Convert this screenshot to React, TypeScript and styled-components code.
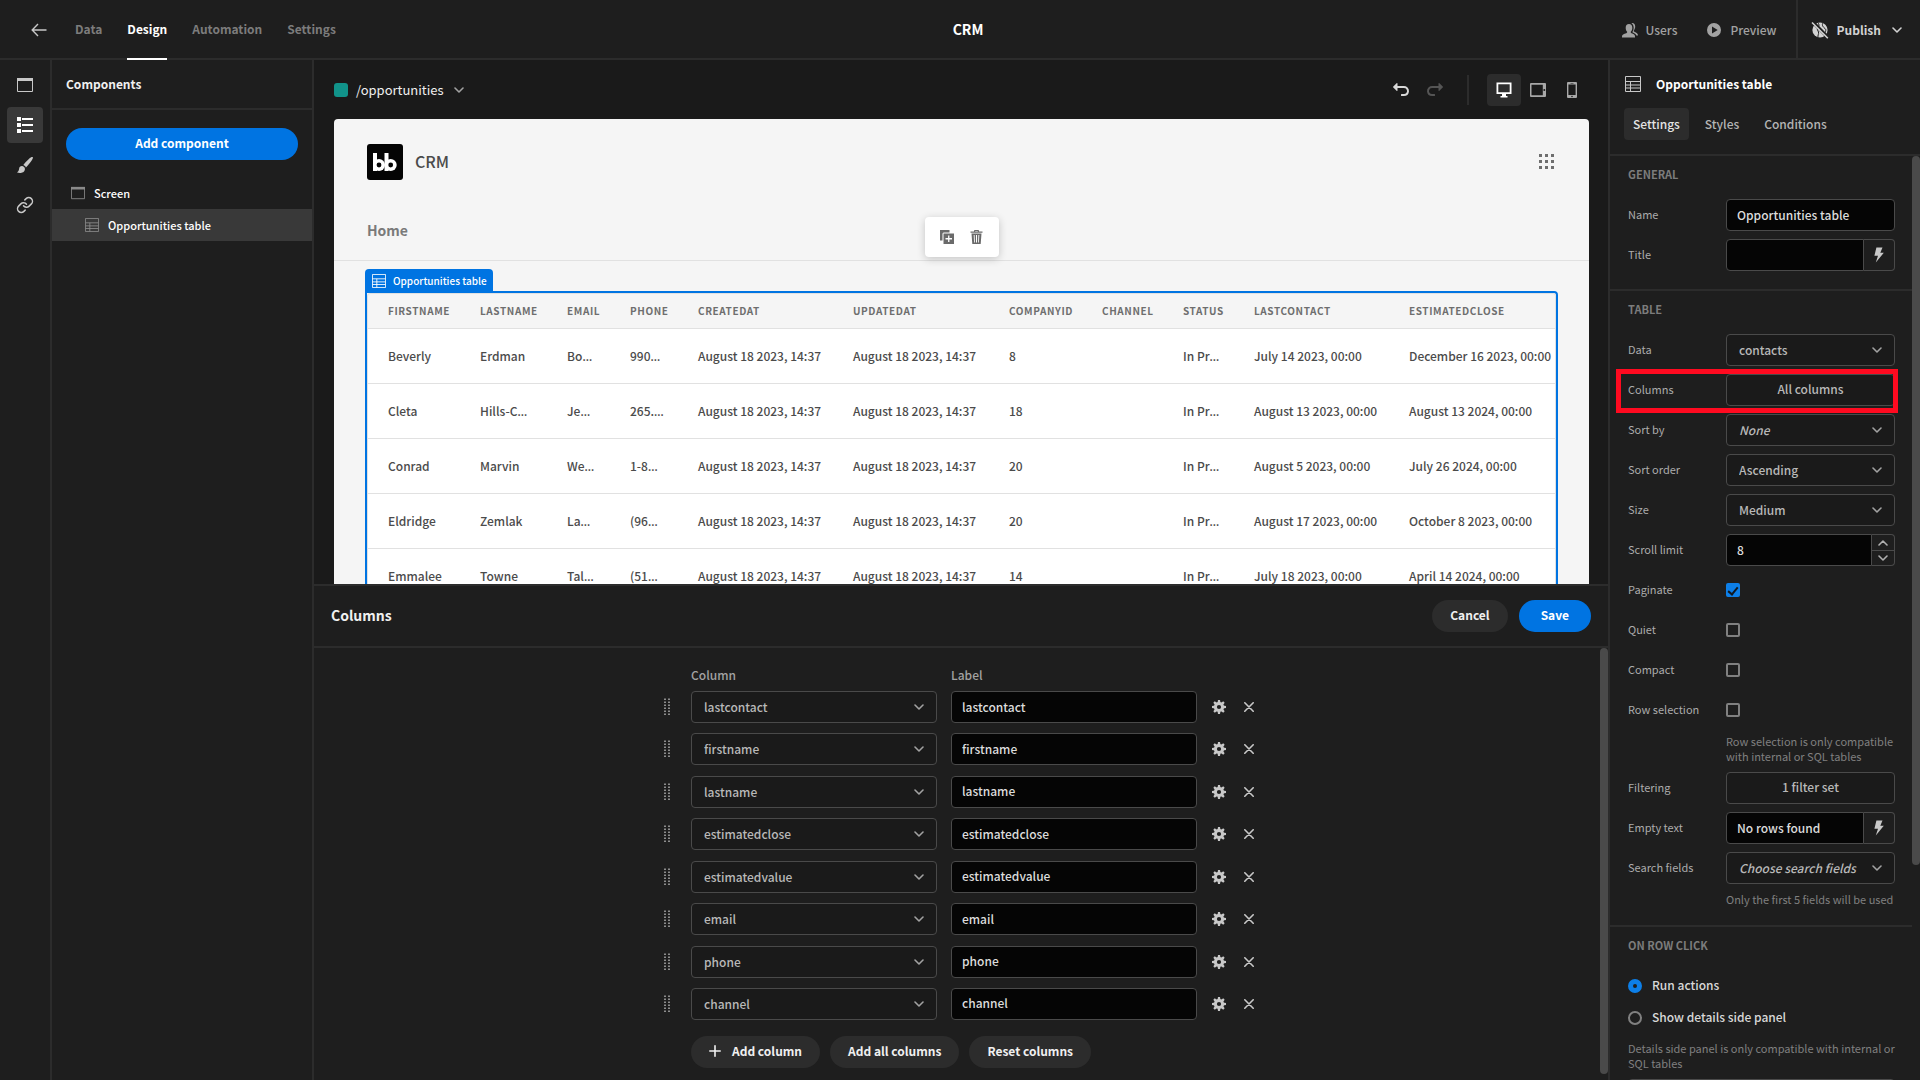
import React from "react";
import styled, { createGlobalStyle, css } from "styled-components";
import { Link as LinkIcon } from "lucide-react";

const c = {
  bg: "#1a1a1a",
  panel: "#1e1e1e",
  raised: "#2c2c2c",
  selected: "#393939",
  line: "#2c2c2c",
  control: "#4a4a4a",
  input: "#050505",
  text: "#c8c8c8",
  bright: "#f0f0f0",
  muted: "#a2a2a2",
  dim: "#7c7c7c",
  blue: "#0074e2",
};

const Global = createGlobalStyle`
  *, *::before, *::after { box-sizing: border-box; }
  body { margin: 0; background: ${c.bg}; }
  body, button, input, select {
    font-family: "Noto Sans CJK SC", "Noto Sans", sans-serif;
    font-size: 12px;
    line-height: 16px;
  }
  button { margin: 0; padding: 0; border: 0; background: none; color: inherit; cursor: pointer; }
  h1, h2, h3, p { margin: 0; }
  svg { display: block; flex: none; }
`;

/* ---------- icons ---------- */

const ArrowLeft = () => (
  <svg width="16" height="14" viewBox="0 0 16 14" fill="none" stroke="currentColor" strokeWidth="1.4">
    <path d="M15.5 7H1.2M7 1L1.2 7L7 13" />
  </svg>
);
const Page = ({ w = 16 }: { w?: number }) => (
  <svg width={w} height={w} viewBox="0 0 16 16" fill="none" stroke="currentColor">
    <path d="M.5 3V14.5H15.5V3" />
    <path d="M0 2.5H16" strokeWidth="3" />
  </svg>
);
const ListView = () => (
  <svg width="16" height="16" viewBox="0 0 16 16" fill="currentColor">
    <path d="M0 0H4V4H0ZM0 6H4V10H0ZM0 12H4V16H0ZM5 1H16V3H5ZM5 7H16V9H5ZM5 13H16V15H5Z" />
  </svg>
);
const Brush = () => (
  <svg width="18" height="18" viewBox="0 0 18 18" fill="currentColor">
    <path d="M16.7 1.1C16 .5 14.800 1.200 13.600 2.200C10.900 4.600 8.200 7.700 7.300 9.100C8.600 9.500 9.500 10.400 9.900 11.500C11.600 9.900 14.400 6.600 16 4C16.800 2.700 17.200 1.600 16.700 1.100Z" />
    <path d="M6.300 10.100C4.500 9.900 3.300 11.100 3.100 12.700C2.900 14.300 2.200 15.600 1 16.500C3.600 17.300 6.600 16.900 8 15.400C9.300 14 9.100 12.300 8.300 11.300C7.800 10.600 7.100 10.200 6.300 10.100Z" />
  </svg>
);
const TableIcon = ({ w = 16 }: { w?: number }) => (
  <svg width={w} height={w} viewBox="0 0 16 16" fill="none" stroke="currentColor">
    <path d="M.5 .5H15.500V15.500H.5ZM.5 5.500H15.500M.5 9H15.500M.5 12H15.500M5.500 5.500V15.500" />
  </svg>
);
const Chevron = ({ up }: { up?: boolean }) => (
  <svg width="10" height="6" viewBox="0 0 10 6" fill="none" stroke="currentColor" strokeWidth="1.600" strokeLinecap="round" strokeLinejoin="round">
    <path d={up ? "M1 5L5 1L9 5" : "M1 1L5 5L9 1"} />
  </svg>
);
const undoPath =
  "M15.3315,6.271A5.1695,5.1695,0,0,0,11.8355,5H5.5V2.4A.4.4,0,0,0,5.1,2a.392.392,0,0,0-.2635.1L1.072,5.8245a.25.25,0,0,0,0,.35L4.834,9.9a.392.392,0,0,0,.2635.1.4.4,0,0,0,.4-.4V7h6.441a3.06934,3.06934,0,0,1,3.0555,2.4355A3,3,0,0,1,12,13H9.5a.5.5,0,0,0-.5.5v1a.5.5,0,0,0,.5.5h2.263a5.16751,5.16751,0,0,0,5.213-4.5055A4.9725,4.9725,0,0,0,15.3315,6.271Z";
const Undo = ({ flip }: { flip?: boolean }) => (
  <svg width="18" height="18" viewBox="0 0 18 18" fill="currentColor">
    <path d={undoPath} transform={flip ? "matrix(-1 0 0 1 18 0)" : undefined} />
  </svg>
);
const Desktop = () => (
  <svg width="16" height="16" viewBox="0 0 16 16" fill="currentColor">
    <path fillRule="evenodd" d="M.5 .5H15.500V12H10V14H11.500V15.500H4.500V14H6V12H.5ZM2.300 2.300V10.200H13.700V2.300Z" />
  </svg>
);
const Tablet = () => (
  <svg width="16" height="14" viewBox="0 0 16 14" fill="currentColor">
    <path fillRule="evenodd" d="M1 0H15A1 1 0 0 1 16 1V13A1 1 0 0 1 15 14H1A1 1 0 0 1 0 13V1A1 1 0 0 1 1 0ZM1.500 1.700V12.300H12.800V1.700ZM14.300 6A1 1 0 1 0 14.300 8A1 1 0 1 0 14.300 6Z" />
  </svg>
);
const Phone = () => (
  <svg width="10" height="16" viewBox="0 0 10 16" fill="currentColor">
    <path fillRule="evenodd" d="M1 0H9A1 1 0 0 1 10 1V15A1 1 0 0 1 9 16H1A1 1 0 0 1 0 15V1A1 1 0 0 1 1 0ZM1.400 2.500V13H8.600V2.500ZM3.500 .9V1.600H6.500V.9ZM5 13.700A.8 .8 0 1 0 5 15.300A.8 .8 0 1 0 5 13.700Z" />
  </svg>
);
const Users = () => (
  <svg width="16" height="15" viewBox="0 0 16 15" fill="currentColor">
    <path d="M7 1C9.200 1 10.300 2.600 10.300 4.700C10.300 6.300 9.700 7.700 8.900 8.600C8.500 9.300 8.700 9.900 9.500 10.200C11.700 10.900 13 11.600 13 13.400V14.500H0V13.400C0 11.600 1.800 10.900 4.300 10.200C5.200 9.900 5.400 9.300 5 8.600C4.200 7.700 3.700 6.300 3.700 4.700C3.700 2.600 4.800 1 7 1Z" />
    <path d="M9.500 .2C11.700 -.3 13.200 1.300 13.200 3.600C13.200 5.200 12.600 6.400 12 7.200C11.600 7.900 11.800 8.500 12.400 8.800C14.600 9.600 16 10.600 16 12.500H14.400C13.900 11 12.300 10.200 10.700 9.500C10.300 9.200 10.400 8.900 10.700 8.500C11.500 7 11.800 5.500 11.600 4C11.400 2.200 10.700 1 9.500 .2Z" />
  </svg>
);
const Play = () => (
  <svg width="14" height="14" viewBox="0 0 14 14" fill="currentColor">
    <path fillRule="evenodd" d="M7 0A7 7 0 1 0 7 14A7 7 0 1 0 7 0ZM5 3.500L10.700 7L5 10.500Z" />
  </svg>
);
const GlobeOff = () => (
  <svg width="18" height="18" viewBox="0 0 18 18">
    <circle cx="9" cy="9" r="7.600" fill="currentColor" />
    <path d="M6.500 1.500C8.500 3 8.500 5 6.800 6.800C5.500 8.300 7 9.500 7.500 11C8 13 6.500 14.500 7 16.500M12 2C10.500 4 12 6 14 7.500C16 9 14 12 12 14" stroke={c.panel} strokeWidth="1" fill="none" />
    <path d="M1.500 .8L17.200 16.500" stroke={c.panel} strokeWidth="3.400" />
    <path d="M1 1.500L16.800 17.200" stroke="currentColor" strokeWidth="1.600" />
  </svg>
);
const GridDots = () => (
  <svg width="17" height="16" viewBox="0 0 17 16" fill="currentColor">
    {[0, 6, 12].map((y) => [0, 6, 12].map((x) => <rect key={`${x}-${y}`} x={x} y={y} width="3" height="3" />))}
  </svg>
);
const Duplicate = () => (
  <svg width="14" height="14" viewBox="0 0 14 14" fill="currentColor">
    <path d="M0 0H9.500V2.500H3.500L2.500 3.500V10.500H0Z" />
    <path fillRule="evenodd" d="M3.500 3.500H14V14H3.500ZM8.100 5.500V8.100H5.500V9.400H8.100V12H9.400V9.400H12V8.100H9.400V5.500Z" />
  </svg>
);
const Trash = () => (
  <svg width="13" height="14" viewBox="0 0 13 14" fill="currentColor">
    <path d="M4 1.500V.8A.8 .8 0 0 1 4.800 0H8.200A.8 .8 0 0 1 9 .8V1.500H12.500V2.800H.5V1.500ZM5.200 1.500H7.800V1H5.200Z" fillRule="evenodd" />
    <path fillRule="evenodd" d="M1.500 3.500H11.500L10.700 14H2.300ZM3.700 5L4.100 12.500H4.900L4.600 5ZM6 5V12.500H7V5ZM8.400 5L8.100 12.500H8.900L9.300 5Z" />
  </svg>
);
const Bolt = () => (
  <svg width="10" height="16" viewBox="0 0 10 16" fill="currentColor">
    <path d="M2.400 .5H8.500L6.300 5.800H9.800L1.800 15.500L4 8.800H.4Z" />
  </svg>
);
const Gear = () => (
  <svg width="14" height="14" viewBox="0 0 14 14" fill="currentColor">
    {[0, 45, 90, 135].map((a) => (
      <path key={a} transform={`rotate(${a} 7 7)`} d="M6 0H8L8.500 3H5.500ZM6 14H8L8.500 11H5.500Z" />
    ))}
    <path fillRule="evenodd" d="M7 1.900A5.100 5.100 0 1 0 7 12.100A5.100 5.100 0 1 0 7 1.900ZM7 4.900A2.100 2.100 0 1 1 7 9.100A2.100 2.100 0 1 1 7 4.900Z" />
  </svg>
);
const Cross = () => (
  <svg width="10" height="10" viewBox="0 0 10 10" stroke="currentColor" strokeWidth="1.600" strokeLinecap="round">
    <path d="M.8 .8L9.200 9.200M9.200 .8L.8 9.200" />
  </svg>
);
const Plus = () => (
  <svg width="12" height="12" viewBox="0 0 12 12" stroke="currentColor" strokeWidth="1.600" strokeLinecap="round">
    <path d="M6 .8V11.200M.8 6H11.200" />
  </svg>
);
const DragDots = () => (
  <svg width="12" height="18" viewBox="0 0 12 18" fill="currentColor">
    {[0, 3, 6, 9, 12, 15].map((y) => [3, 7].map((x) => <rect key={`${x}-${y}`} x={x} y={y + 0.500} width="2" height="1.500" />))}
  </svg>
);
const Logo = () => (
  <svg width="36" height="36" viewBox="0 0 36 36">
    <rect width="36" height="36" rx="3" fill="#040404" />
    <g fill="#fff">
      <path d="M6 9H10V27H6ZM17.500 9H21.500V27H17.500Z" />
      <circle cx="12" cy="21" r="6" />
      <circle cx="23.700" cy="21" r="6" />
    </g>
    <circle cx="12" cy="21" r="2.400" fill="#040404" />
    <circle cx="23.700" cy="21" r="2.400" fill="#040404" />
  </svg>
);

/* ---------- frame ---------- */

const Shell = styled.div`
  display: flex;
  flex-direction: column;
  height: 100vh;
  overflow: hidden;
  background: ${c.panel};
  color: ${c.text};
`;
const TopBar = styled.header`
  display: grid;
  grid-template-columns: 1fr auto 1fr;
  align-items: stretch;
  height: 60px;
  flex: none;
  padding-left: 16px;
  border-bottom: 2px solid ${c.line};
`;
const TopNav = styled.nav`
  display: flex;
  align-items: center;
  gap: 25px;
  padding-left: 15px;
`;
const BackButton = styled.button`
  margin-right: 3px;
  color: ${c.text};
`;
const TopLink = styled.a<{ $active?: boolean }>`
  display: flex;
  align-items: center;
  height: 60px;
  align-self: flex-start;
  font-weight: 700;
  text-decoration: none;
  color: ${(p) => (p.$active ? "#fff" : c.dim)};
  border-bottom: 2px solid ${(p) => (p.$active ? "#fff" : "transparent")};
`;
const AppTitle = styled.h1`
  align-self: center;
  padding-bottom: 2px;
  font-size: 14px;
  font-weight: 700;
  line-height: 20px;
  color: #fff;
`;
const TopActions = styled.div`
  display: flex;
  justify-content: flex-end;
`;
const TopAction = styled.button`
  display: flex;
  align-items: center;
  gap: 8px;
  margin-right: 30px;
  font-weight: 500;
  color: ${c.muted};
  &:nth-of-type(2) { gap: 9px; margin-right: 19px; }
`;
const PublishButton = styled.button`
  display: flex;
  align-items: center;
  gap: 8px;
  padding: 0 18px 0 13px;
  border-left: 2px solid ${c.line};
  font-weight: 700;
  color: #d2d2d2;
  & > :last-child { margin-left: 3px; }
`;
const Body = styled.div`
  display: flex;
  flex: 1;
  min-height: 0;
`;

/* ---------- left side ---------- */

const Rail = styled.nav`
  display: flex;
  flex-direction: column;
  align-items: center;
  gap: 4px;
  width: 52px;
  flex: none;
  padding-top: 7px;
  border-right: 2px solid ${c.line};
`;
const RailButton = styled.button<{ $active?: boolean }>`
  display: grid;
  place-items: center;
  width: 36px;
  height: 36px;
  border-radius: 4px;
  color: ${(p) => (p.$active ? "#fff" : c.text)};
  background: ${(p) => (p.$active ? c.selected : "transparent")};
`;
const Side = styled.aside`
  display: flex;
  flex-direction: column;
  width: 262px;
  flex: none;
  border-right: 2px solid ${c.line};
`;
const SideTitle = styled.h2`
  padding: 16px 14px;
  border-bottom: 2px solid ${c.line};
  font-size: 12px;
  font-weight: 700;
  line-height: 16px;
  color: ${c.bright};
`;
const pill = css`
  display: inline-flex;
  align-items: center;
  justify-content: center;
  height: 32px;
  border-radius: 16px;
  font-weight: 700;
`;
const PrimaryPill = styled.button`
  ${pill}
  padding: 0 22px 2px;
  background: ${c.blue};
  color: #fff;
`;
const Pill = styled.button`
  ${pill}
  gap: 11px;
  padding: 0 18px 2px;
  background: ${c.raised};
  color: ${c.bright};
`;
const AddComponent = styled(PrimaryPill)`
  margin: 18px 14px 17px;
`;
const TreeItem = styled.button<{ $depth: number; $active?: boolean }>`
  display: flex;
  align-items: center;
  gap: 9px;
  height: 32px;
  padding-left: ${(p) => 19 + p.$depth * 14}px;
  font-size: 11px;
  font-weight: 500;
  color: #fff;
  background: ${(p) => (p.$active ? c.selected : "transparent")};
  svg { color: #8a8a8a; }
`;

/* ---------- centre ---------- */

const Centre = styled.main`
  position: relative;
  display: flex;
  flex-direction: column;
  flex: 1;
  min-width: 0;
  background: ${c.bg};
`;
const Toolbar = styled.div`
  display: flex;
  align-items: center;
  padding: 14px 19px 13px 20px;
`;
const ScreenPicker = styled.button`
  display: flex;
  align-items: center;
  gap: 8px;
  margin-right: auto;
  font-size: 13px;
  color: #f0f0f0;
  & > svg { margin-left: 2px; color: ${c.muted}; }
`;
const Swatch = styled.span`
  width: 14px;
  height: 14px;
  border-radius: 3px;
  background: #11938a;
`;
const ToolButton = styled.button<{ $active?: boolean; $tone?: string }>`
  display: grid;
  place-items: center;
  width: 34px;
  height: 32px;
  border-radius: 4px;
  color: ${(p) => p.$tone ?? "#a8a8a8"};
  background: ${(p) => (p.$active ? c.raised : "transparent")};
`;
const ToolDivider = styled.span`
  width: 2px;
  height: 30px;
  margin: 0 18px 0 15px;
  background: ${c.line};
`;
const Preview = styled.section`
  flex: 1;
  min-height: 0;
  margin: 0 19px 0 20px;
  padding: 25px 33px 0;
  overflow: hidden;
  border-radius: 4px 4px 0 0;
  background: #f5f5f5;
  color: #4b4b4b;
`;
const PreviewHead = styled.div`
  display: flex;
  align-items: center;
  gap: 12px;
  & > :last-child { margin-left: auto; color: #6e6e6e; }
`;
const PreviewTitle = styled.h2`
  padding-bottom: 2px;
  font-size: 16px;
  font-weight: 500;
  line-height: 24px;
`;
const PreviewNav = styled.nav`
  margin: 0 -33px;
  padding: 40px 33px 20px;
  border-bottom: 1px solid #e1e1e1;
  a {
    font-size: 14px;
    line-height: 20px;
    font-weight: 700;
    text-decoration: none;
    color: #7a7a7a;
  }
`;
const Selected = styled.div`
  position: relative;
  margin: 30px -2px 0;
  border: 2px solid ${c.blue};
  border-radius: 0 4px 4px 4px;
`;
const SelectedTag = styled.span`
  position: absolute;
  left: -2px;
  bottom: 100%;
  display: flex;
  align-items: center;
  gap: 7px;
  height: 24px;
  padding: 0 6px 0 7px;
  border-radius: 4px 4px 0 0;
  background: ${c.blue};
  color: #fff;
  font-size: 10px;
  font-weight: 500;
`;
const FloatingTools = styled.div`
  position: absolute;
  left: 50%;
  bottom: calc(100% + 36px);
  transform: translateX(-50%);
  display: flex;
  align-items: center;
  gap: 16px;
  height: 40px;
  padding: 0 16px 0 15px;
  border-radius: 4px;
  background: #fff;
  box-shadow: 0 2px 8px rgba(0, 0, 0, 0.200);
  color: #6a6a6a;
`;
const TableClip = styled.div`
  overflow: hidden;
  border: 1px solid #e1e1e1;
  border-radius: 3px;
`;
const DataTable = styled.table`
  table-layout: fixed;
  width: 1240px;
  border-collapse: separate;
  border-spacing: 0;
  th, td {
    padding: 0 0 0 20px;
    text-align: left;
    white-space: nowrap;
    border-bottom: 1px solid #e1e1e1;
  }
  th {
    height: 35px;
    font-size: 10px;
    font-weight: 700;
    letter-spacing: 0.060em;
    color: #6e6e6e;
  }
  td {
    height: 55px;
    font-weight: 500;
    color: #4b4b4b;
    background: #fff;
  }
`;
const Dots = styled.span`
  font-family: "Noto Sans", sans-serif;
`;

/* ---------- bottom drawer ---------- */

const Drawer = styled.section`
  position: relative;
  display: flex;
  flex-direction: column;
  flex: 0 0 496px;
  border-top: 2px solid ${c.line};
  background: ${c.panel};
`;
const DrawerHead = styled.div`
  display: flex;
  align-items: center;
  gap: 11px;
  padding: 14px 17px;
  border-bottom: 2px solid ${c.line};
  h2 {
    margin-right: auto;
    padding-bottom: 2px;
    font-size: 14px;
    font-weight: 700;
    line-height: 20px;
    color: ${c.bright};
  }
`;
const DrawerBody = styled.div`
  width: 100%;
  max-width: 600px;
  margin: 0 auto;
  padding: 19px 4px 0 0;
`;
const FieldGrid = styled.div`
  display: grid;
  grid-template-columns: 16px 1fr 1fr 16px 16px;
  column-gap: 14px;
  align-items: center;
`;
const FieldHead = styled(FieldGrid)`
  margin-bottom: 8px;
  color: ${c.muted};
  font-weight: 500;
  & > :first-child { grid-column: 2; }
`;
const FieldList = styled.div`
  display: flex;
  flex-direction: column;
  justify-content: space-between;
  height: 329px;
`;
const IconButton = styled.button`
  display: grid;
  place-items: center;
  height: 32px;
  color: ${c.text};
`;
const DragHandle = styled.span`
  color: #8c8c8c;
`;
const DrawerActions = styled.div`
  display: flex;
  gap: 10px;
  padding: 16px 0 0 30px;
`;
const DrawerThumb = styled.span`
  position: absolute;
  top: 62px;
  right: 0;
  bottom: 6px;
  width: 8px;
  border-radius: 4px;
  background: #4a4a4a;
`;

/* ---------- controls ---------- */

const box = css`
  width: 100%;
  min-width: 0;
  height: 32px;
  margin: 0;
  border: 1px solid ${c.control};
  border-radius: 4px;
  outline: none;
`;
const TextInput = styled.input`
  ${box}
  padding: 0 10px 2px;
  background: ${c.input};
  color: #dcdcdc;
  font-weight: 500;
`;
const SelectWrap = styled.span`
  position: relative;
  display: block;
  color: ${c.muted};
  svg {
    position: absolute;
    top: 13px;
    right: 13px;
    pointer-events: none;
  }
`;
const SelectBox = styled.select<{ $hint?: boolean }>`
  ${box}
  appearance: none;
  padding: 0 24px 0 12px;
  background: ${c.bg};
  color: #b8b8b8;
  font-weight: 500;
  font-style: ${(p) => (p.$hint ? "italic" : "normal")};
`;
const ActionBox = styled.button`
  ${box}
  padding-bottom: 2px;
  background: ${c.bg};
  color: #b8b8b8;
  font-weight: 500;
`;
const Joined = styled.div<{ $side: number }>`
  display: grid;
  grid-template-columns: 1fr ${(p) => p.$side}px;
  & > input { border-radius: 4px 0 0 4px; }
`;
const BoltButton = styled.button`
  display: grid;
  place-items: center;
  border: 1px solid ${c.control};
  border-left: 0;
  border-radius: 0 4px 4px 0;
`;
const Stepper = styled.div`
  display: grid;
  grid-template-rows: 1fr 1fr;
  border: 1px solid ${c.control};
  border-left: 0;
  border-radius: 0 4px 4px 0;
  color: #b0b0b0;
  button { display: grid; place-items: center; }
  button + button { border-top: 1px solid ${c.control}; }
`;
const CheckBox = styled.input`
  appearance: none;
  display: grid;
  place-items: center;
  width: 14px;
  height: 14px;
  margin: 0;
  border: 2px solid #808080;
  border-radius: 2px;
  &:checked { border-color: #0d7fe8; background: #0d7fe8; }
  &:checked::after {
    content: "";
    width: 6px;
    height: 10px;
    margin-bottom: 2px;
    border: solid #101820;
    border-width: 0 2px 2px 0;
    transform: rotate(40deg);
  }
`;
const RadioRow = styled.label`
  display: flex;
  align-items: center;
  gap: 10px;
  height: 32px;
  font-size: 12px;
  font-weight: 500;
  color: #d8d8d8;
  span { padding-bottom: 2px; }
`;
const Radio = styled.input`
  appearance: none;
  width: 14px;
  height: 14px;
  margin: 0;
  border: 2px solid #808080;
  border-radius: 50%;
  &:checked { border: 5px solid #0d7fe8; }
`;

/* ---------- settings panel ---------- */

const Settings = styled.aside`
  display: flex;
  flex-direction: column;
  width: 312px;
  flex: none;
  border-left: 2px solid ${c.line};
`;
const SettingsTitle = styled.h2`
  display: flex;
  align-items: center;
  gap: 15px;
  height: 48px;
  padding-left: 15px;
  font-size: 12px;
  font-weight: 700;
  color: #fff;
  svg { color: ${c.text}; }
`;
const Tabs = styled.div`
  display: flex;
  gap: 7px;
  padding: 0 14px 14px;
  border-bottom: 2px solid ${c.line};
`;
const Tab = styled.button<{ $active?: boolean }>`
  height: 32px;
  padding: 0 9px;
  border-radius: 4px;
  font-weight: 500;
  color: ${(p) => (p.$active ? "#e4e4e4" : "#b4b4b4")};
  background: ${(p) => (p.$active ? c.raised : "transparent")};
`;
const SettingsBody = styled.div`
  display: flex;
  flex: 1;
  min-height: 0;
  overflow: hidden;
`;
const Sections = styled.div`
  flex: 1;
  min-width: 0;
`;
const SettingsThumb = styled.span`
  width: 8px;
  height: 709px;
  border-radius: 4px;
  background: #4a4a4a;
`;
const Section = styled.section<{ $tight?: boolean }>`
  display: flex;
  flex-direction: column;
  gap: ${(p) => (p.$tight ? 0 : 8)}px;
  padding: 8px 17px 18px 18px;
  border-bottom: 2px solid ${c.line};
  h3 {
    margin-bottom: ${(p) => (p.$tight ? 15 : 7)}px;
    font-size: 11px;
    font-weight: 700;
    line-height: 20px;
    color: #7c7c7c;
  }
`;
const Row = styled.div`
  position: relative;
  display: grid;
  grid-template-columns: 98px 1fr;
  align-items: center;
  min-height: 32px;
  & > label, & > span:first-child { padding-bottom: 2px; font-size: 11px; color: #acacac; }
`;
const Highlight = styled.span`
  position: absolute;
  inset: -5px -3px -7px -12px;
  border: 5px solid #ff0a20;
  pointer-events: none;
`;
const Help = styled.p<{ $indent?: boolean }>`
  margin-left: ${(p) => (p.$indent ? 98 : 0)}px;
  font-size: 11px;
  line-height: 15px;
  color: #808080;
`;
const WideHelp = styled(Help)`
  margin: 7px 0 8px;
`;

const Select = ({ id, value, hint, label }: { id?: string; value: string; hint?: boolean; label?: string }) => (
  <SelectWrap>
    <SelectBox id={id} aria-label={label} $hint={hint} defaultValue={value}>
      <option>{value}</option>
    </SelectBox>
    <Chevron />
  </SelectWrap>
);

const Cell = ({ value }: { value: string }) =>
  value.endsWith("…") ? <td>{value.slice(0, -1)}<Dots>…</Dots></td> : <td>{value}</td>;

const fields = ["lastcontact", "firstname", "lastname", "estimatedclose", "estimatedvalue", "email", "phone", "channel"];

const heads: [string, number][] = [
  ["firstName", 92], ["lastName", 87], ["email", 63], ["phone", 68], ["createdAt", 155], ["updatedAt", 156],
  ["companyId", 93], ["channel", 81], ["status", 71], ["lastContact", 155], ["estimatedClose", 219],
];
const stamp = "August 18 2023, 14:37";
const rows = [
  ["Beverly", "Erdman", "Bo…", "990…", stamp, stamp, "8", "", "In Pr…", "July 14 2023, 00:00", "December 16 2023, 00:00"],
  ["Cleta", "Hills-C…", "Je…", "265.…", stamp, stamp, "18", "", "In Pr…", "August 13 2023, 00:00", "August 13 2024, 00:00"],
  ["Conrad", "Marvin", "We…", "1-8…", stamp, stamp, "20", "", "In Pr…", "August 5 2023, 00:00", "July 26 2024, 00:00"],
  ["Eldridge", "Zemlak", "La…", "(96…", stamp, stamp, "20", "", "In Pr…", "August 17 2023, 00:00", "October 8 2023, 00:00"],
  ["Emmalee", "Towne", "Tal…", "(51…", stamp, stamp, "14", "", "In Pr…", "July 18 2023, 00:00", "April 14 2024, 00:00"],
];

export default function App() {
  return (
    <Shell>
      <Global />
      <TopBar>
        <TopNav>
          <BackButton aria-label="Back"><ArrowLeft /></BackButton>
          <TopLink href="#data">Data</TopLink>
          <TopLink href="#design" $active>Design</TopLink>
          <TopLink href="#automation">Automation</TopLink>
          <TopLink href="#settings">Settings</TopLink>
        </TopNav>
        <AppTitle>CRM</AppTitle>
        <TopActions>
          <TopAction><Users />Users</TopAction>
          <TopAction><Play />Preview</TopAction>
          <PublishButton><GlobeOff />Publish<Chevron /></PublishButton>
        </TopActions>
      </TopBar>
      <Body>
        <Rail>
          <RailButton aria-label="Screens"><Page /></RailButton>
          <RailButton aria-label="Components" $active><ListView /></RailButton>
          <RailButton aria-label="Theme"><Brush /></RailButton>
          <RailButton aria-label="Navigation"><LinkIcon size={18} /></RailButton>
        </Rail>
        <Side>
          <SideTitle>Components</SideTitle>
          <AddComponent>Add component</AddComponent>
          <TreeItem $depth={0}><Page w={14} />Screen</TreeItem>
          <TreeItem $depth={1} $active><TableIcon w={14} />Opportunities table</TreeItem>
        </Side>
        <Centre>
          <Toolbar>
            <ScreenPicker><Swatch />/opportunities<Chevron /></ScreenPicker>
            <ToolButton aria-label="Undo" $tone="#d8d8d8"><Undo /></ToolButton>
            <ToolButton aria-label="Redo" $tone="#555"><Undo flip /></ToolButton>
            <ToolDivider />
            <ToolButton aria-label="Desktop" $active $tone="#fff"><Desktop /></ToolButton>
            <ToolButton aria-label="Tablet"><Tablet /></ToolButton>
            <ToolButton aria-label="Mobile"><Phone /></ToolButton>
          </Toolbar>
          <Preview>
            <PreviewHead>
              <Logo />
              <PreviewTitle>CRM</PreviewTitle>
              <GridDots />
            </PreviewHead>
            <PreviewNav><a href="#home">Home</a></PreviewNav>
            <Selected>
              <SelectedTag><TableIcon w={14} />Opportunities table</SelectedTag>
              <FloatingTools>
                <button aria-label="Duplicate"><Duplicate /></button>
                <button aria-label="Delete"><Trash /></button>
              </FloatingTools>
              <TableClip>
                <DataTable>
                  <colgroup>{heads.map(([h, w]) => <col key={h} width={w} />)}</colgroup>
                  <thead>
                    <tr>{heads.map(([h]) => <th key={h}>{h.toUpperCase()}</th>)}</tr>
                  </thead>
                  <tbody>
                    {rows.map((r) => (
                      <tr key={r[0]}>{r.map((v, i) => <Cell key={i} value={v} />)}</tr>
                    ))}
                  </tbody>
                </DataTable>
              </TableClip>
            </Selected>
          </Preview>
          <Drawer>
            <DrawerHead>
              <h2>Columns</h2>
              <Pill>Cancel</Pill>
              <PrimaryPill>Save</PrimaryPill>
            </DrawerHead>
            <DrawerBody>
              <FieldHead><span>Column</span><span>Label</span></FieldHead>
              <FieldList>
                {fields.map((f) => (
                  <FieldGrid key={f}>
                    <DragHandle><DragDots /></DragHandle>
                    <Select value={f} label={`Column ${f}`} />
                    <TextInput aria-label={`Label for ${f}`} defaultValue={f} />
                    <IconButton aria-label="Configure"><Gear /></IconButton>
                    <IconButton aria-label="Remove"><Cross /></IconButton>
                  </FieldGrid>
                ))}
              </FieldList>
              <DrawerActions>
                <Pill><Plus />Add column</Pill>
                <Pill>Add all columns</Pill>
                <Pill>Reset columns</Pill>
              </DrawerActions>
            </DrawerBody>
            <DrawerThumb />
          </Drawer>
        </Centre>
        <Settings>
          <SettingsTitle><TableIcon />Opportunities table</SettingsTitle>
          <Tabs>
            <Tab $active>Settings</Tab>
            <Tab>Styles</Tab>
            <Tab>Conditions</Tab>
          </Tabs>
          <SettingsBody>
            <Sections>
              <Section>
                <h3>GENERAL</h3>
                <Row><label htmlFor="name">Name</label><TextInput id="name" defaultValue="Opportunities table" /></Row>
                <Row>
                  <label htmlFor="title">Title</label>
                  <Joined $side={31}><TextInput id="title" /><BoltButton aria-label="Bind title"><Bolt /></BoltButton></Joined>
                </Row>
              </Section>
              <Section>
                <h3>TABLE</h3>
                <Row><label htmlFor="data">Data</label><Select id="data" value="contacts" /></Row>
                <Row><span>Columns</span><ActionBox>All columns</ActionBox><Highlight /></Row>
                <Row><label htmlFor="sort">Sort by</label><Select id="sort" value="None" hint /></Row>
                <Row><label htmlFor="order">Sort order</label><Select id="order" value="Ascending" /></Row>
                <Row><label htmlFor="size">Size</label><Select id="size" value="Medium" /></Row>
                <Row>
                  <label htmlFor="limit">Scroll limit</label>
                  <Joined $side={23}>
                    <TextInput id="limit" defaultValue="8" inputMode="numeric" />
                    <Stepper>
                      <button aria-label="Increase"><Chevron up /></button>
                      <button aria-label="Decrease"><Chevron /></button>
                    </Stepper>
                  </Joined>
                </Row>
                <Row><label htmlFor="paginate">Paginate</label><CheckBox id="paginate" type="checkbox" defaultChecked /></Row>
                <Row><label htmlFor="quiet">Quiet</label><CheckBox id="quiet" type="checkbox" /></Row>
                <Row><label htmlFor="compact">Compact</label><CheckBox id="compact" type="checkbox" /></Row>
                <Row><label htmlFor="rowsel">Row selection</label><CheckBox id="rowsel" type="checkbox" /></Row>
                <Help $indent>Row selection is only compatible with internal or SQL tables</Help>
                <Row><span>Filtering</span><ActionBox>1 filter set</ActionBox></Row>
                <Row>
                  <label htmlFor="empty">Empty text</label>
                  <Joined $side={31}><TextInput id="empty" defaultValue="No rows found" /><BoltButton aria-label="Bind empty text"><Bolt /></BoltButton></Joined>
                </Row>
                <Row><label htmlFor="search">Search fields</label><Select id="search" value="Choose search fields" hint /></Row>
                <Help $indent>Only the first 5 fields will be used</Help>
              </Section>
              <Section $tight>
                <h3>ON ROW CLICK</h3>
                <RadioRow><Radio type="radio" name="click" defaultChecked /><span>Run actions</span></RadioRow>
                <RadioRow><Radio type="radio" name="click" /><span>Show details side panel</span></RadioRow>
                <WideHelp>Details side panel is only compatible with internal or SQL tables</WideHelp>
                <ActionBox aria-label="Define actions" />
              </Section>
            </Sections>
            <SettingsThumb />
          </SettingsBody>
        </Settings>
      </Body>
    </Shell>
  );
}
